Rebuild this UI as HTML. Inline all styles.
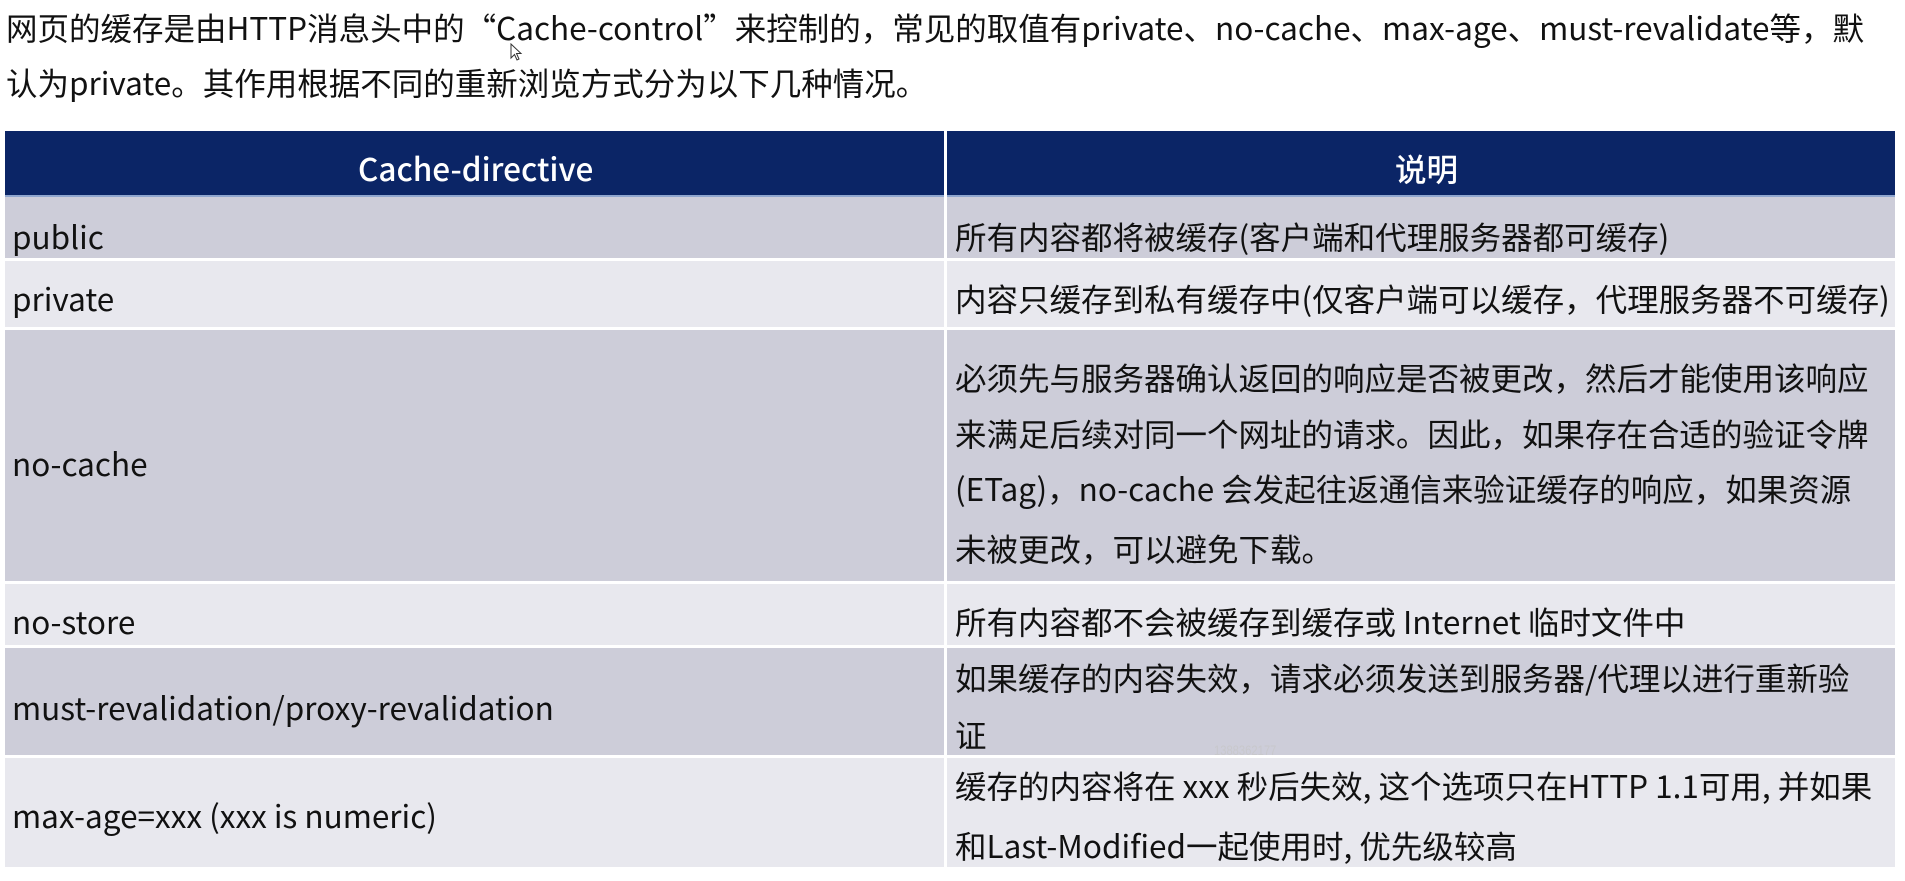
<!DOCTYPE html>
<html><head><meta charset="utf-8"><style>
*{margin:0;padding:0;box-sizing:border-box}
body{width:1905px;height:881px;background:#fff;position:relative;overflow:hidden;font-family:"Noto Sans CJK SC","Liberation Sans",sans-serif;color:#111}
.t{position:absolute;white-space:nowrap;font-size:31.5px;line-height:40px}
.r{position:absolute;left:5px;width:1890px}
.d{background:#cdcdd9}.l{background:#e8e8ee}
.vl{position:absolute;left:944px;width:3px;top:131px;height:736px;background:#fff}
.hs{position:absolute;left:5px;width:1890px;height:3px;background:#fff}
</style></head><body>
<div class="t" style="left:6px;top:7px">网页的缓存是由HTTP消息头中的“Cache-control”来控制的，常见的取值有private、no-cache、max-age、must-revalidate等，默</div>
<div class="t" style="left:6px;top:62px">认为private。其作用根据不同的重新浏览方式分为以下几种情况。</div>
<svg style="position:absolute;left:510px;top:43px" width="14" height="20" viewBox="0 0 14 20"><path d="M1 1 L1 15 L4.5 11.5 L7 17 L9 16 L6.5 10.5 L11 10.5 Z" fill="#fff" stroke="#333" stroke-width="1"/></svg>

<div class="r" style="top:131px;height:66px;background:#0b2566;border-bottom:2px solid #8fa6cf"></div>
<div class="r d" style="top:197px;height:62px"></div>
<div class="r l" style="top:259px;height:69px"></div>
<div class="r d" style="top:328px;height:254px"></div>
<div class="r l" style="top:582px;height:64px"></div>
<div class="r d" style="top:646px;height:110px"></div>
<div class="r l" style="top:756px;height:111px"></div>
<div class="hs" style="top:258px"></div>
<div class="hs" style="top:327px"></div>
<div class="hs" style="top:581px"></div>
<div class="hs" style="top:645px"></div>
<div class="hs" style="top:755px"></div>
<div class="vl"></div>

<div class="t" style="left:358px;top:148px;color:#fff;font-weight:500">Cache-directive</div>
<div class="t" style="left:1395px;top:148px;color:#fff;font-weight:500">说明</div>

<div class="t" style="left:12px;top:216px">public</div>
<div class="t" style="left:955px;top:216px">所有内容都将被缓存(客户端和代理服务器都可缓存)</div>
<div class="t" style="left:12px;top:278px">private</div>
<div class="t" style="left:955px;top:278px">内容只缓存到私有缓存中(仅客户端可以缓存，代理服务器不可缓存)</div>
<div class="t" style="left:12px;top:443px">no-cache</div>
<div class="t" style="left:955px;top:357px">必须先与服务器确认返回的响应是否被更改，然后才能使用该响应</div>
<div class="t" style="left:955px;top:413px">来满足后续对同一个网址的请求。因此，如果存在合适的验证令牌</div>
<div class="t" style="left:955px;top:468px">(ETag)，no-cache 会发起往返通信来验证缓存的响应，如果资源</div>
<div class="t" style="left:955px;top:528px">未被更改，可以避免下载。</div>
<div class="t" style="left:12px;top:601px">no-store</div>
<div class="t" style="left:955px;top:601px">所有内容都不会被缓存到缓存或 Internet 临时文件中</div>
<div class="t" style="left:12px;top:687px">must-revalidation/proxy-revalidation</div>
<div class="t" style="left:955px;top:657px">如果缓存的内容失效，请求必须发送到服务器/代理以进行重新验</div>
<div class="t" style="left:955px;top:714px">证</div>
<div style="position:absolute;left:1214px;top:742px;font-size:14px;color:#c8c8cc;font-family:'Liberation Sans',sans-serif;transform:scaleX(0.8);transform-origin:0 0">1388362177</div>
<div class="t" style="left:12px;top:795px">max-age=xxx (xxx is numeric)</div>
<div class="t" style="left:955px;top:765px">缓存的内容将在 xxx 秒后失效, 这个选项只在HTTP 1.1可用, 并如果</div>
<div class="t" style="left:955px;top:825px">和Last-Modified一起使用时, 优先级较高</div>
</body></html>
